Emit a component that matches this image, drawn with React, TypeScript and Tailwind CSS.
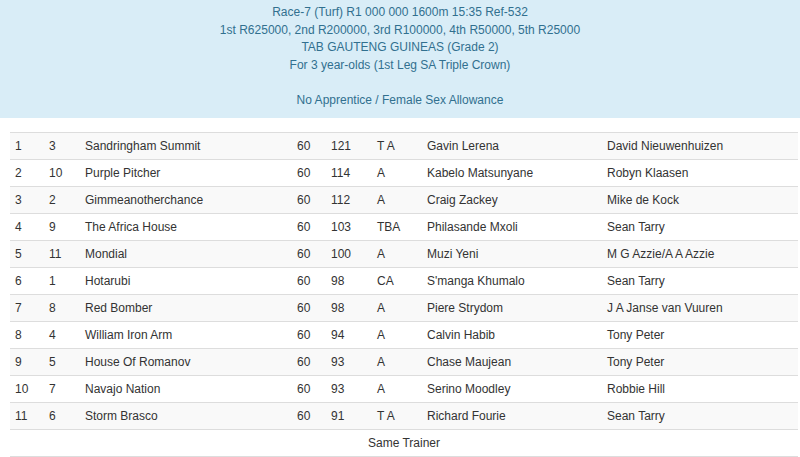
const runners = [
  ["1", "3", "Sandringham Summit", "60", "121", "T A", "Gavin Lerena", "David Nieuwenhuizen"],
  ["2", "10", "Purple Pitcher", "60", "114", "A", "Kabelo Matsunyane", "Robyn Klaasen"],
  ["3", "2", "Gimmeanotherchance", "60", "112", "A", "Craig Zackey", "Mike de Kock"],
  ["4", "9", "The Africa House", "60", "103", "TBA", "Philasande Mxoli", "Sean Tarry"],
  ["5", "11", "Mondial", "60", "100", "A", "Muzi Yeni", "M G Azzie/A A Azzie"],
  ["6", "1", "Hotarubi", "60", "98", "CA", "S'manga Khumalo", "Sean Tarry"],
  ["7", "8", "Red Bomber", "60", "98", "A", "Piere Strydom", "J A Janse van Vuuren"],
  ["8", "4", "William Iron Arm", "60", "94", "A", "Calvin Habib", "Tony Peter"],
  ["9", "5", "House Of Romanov", "60", "93", "A", "Chase Maujean", "Tony Peter"],
  ["10", "7", "Navajo Nation", "60", "93", "A", "Serino Moodley", "Robbie Hill"],
  ["11", "6", "Storm Brasco", "60", "91", "T A", "Richard Fourie", "Sean Tarry"],
];

const headerLines = [
  "Race-7 (Turf) R1 000 000 1600m 15:35 Ref-532",
  "1st R625000, 2nd R200000, 3rd R100000, 4th R50000, 5th R25000",
  "TAB GAUTENG GUINEAS (Grade 2)",
  "For 3 year-olds (1st Leg SA Triple Crown)",
  "\u00a0",
  "No Apprentice / Female Sex Allowance",
];

export default function App() {
  return (
    <div className="min-h-[457px] w-[800px] bg-white font-['Liberation_Sans',Arial,sans-serif] text-[12px] text-[#333]">
      {/* race info banner */}
      <div className="bg-[#d9edf7] pt-[4px] pb-[9px] text-center text-[12px] leading-[17.5px] text-[#31708f]">
        {headerLines.map((line, i) => (
          <div key={i} className="whitespace-nowrap">
            {line}
          </div>
        ))}
      </div>

      <div className="mt-[14px] pl-[10px] pr-[2px]">
        <table className="w-[788px] table-fixed border-collapse">
          <colgroup>
            <col className="w-[34px]" />
            <col className="w-[36px]" />
            <col className="w-[212px]" />
            <col className="w-[34px]" />
            <col className="w-[46px]" />
            <col className="w-[50px]" />
            <col className="w-[180px]" />
            <col className="w-[196px]" />
          </colgroup>
          <tbody>
            {runners.map((r, i) => (
              <tr
                key={r[0]}
                className={`h-[27px] border-t border-[#ddd] ${i % 2 === 0 ? "bg-[#f9f9f9]" : "bg-white"}`}
              >
                {r.map((cell, j) => (
                  <td key={j} className="whitespace-nowrap px-[5px] align-middle leading-[17px]">
                    {cell}
                  </td>
                ))}
              </tr>
            ))}
            <tr className="h-[27px] border-y border-[#ddd]">
              <td colSpan={8} className="px-[5px] text-center leading-[17px]">
                Same Trainer
              </td>
            </tr>
          </tbody>
        </table>
      </div>
    </div>
  );
}
